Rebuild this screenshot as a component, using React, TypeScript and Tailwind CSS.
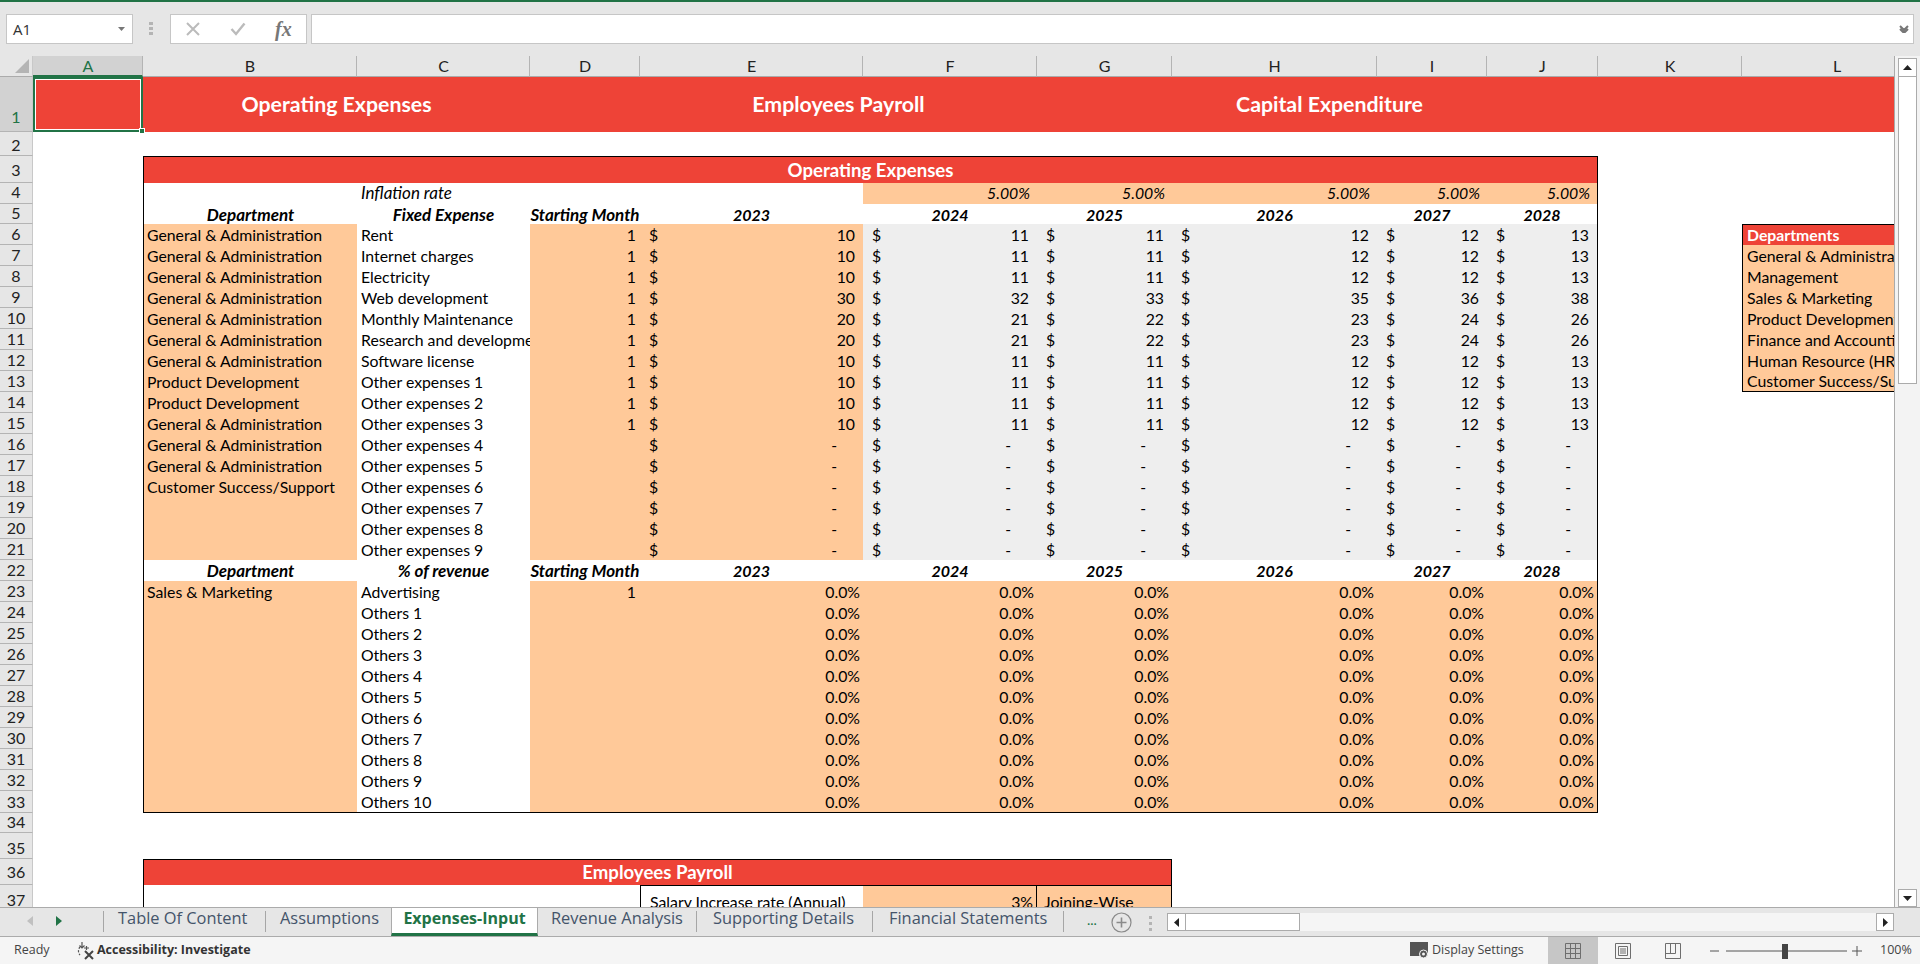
import React from "react";

const GRID = "grid grid-rows-[minmax(0,1fr)] grid-cols-[33px_110px_214px_173px_110px_223px_174px_135px_205px_110px_111px_144px_190px]";
const PEACH = "bg-[#ffc999]";
const GREY = "bg-[#eeeeee]";
const RED = "bg-[#ee4337]";

const COLS: [string, string][] = [
  ["A", "bg-[#d2d2d2] text-[#217346] border-b-2 border-b-[#217346]"],
  ["B", ""], ["C", ""], ["D", ""], ["E", ""], ["F", ""], ["G", ""], ["H", ""], ["I", ""], ["J", ""], ["K", ""], ["L", ""],
];

function Row({ n, h, active, pb, children }: { n: number; h: string; active?: boolean; pb?: string; children: React.ReactNode }) {
  return (
    <div className={`${GRID} ${h}`}>
      <div className={`flex items-end justify-center border-b border-r border-b-[#b4b4b4] border-r-[#c8c8c8] text-[16px] leading-[21px] text-[#222] ${pb ?? ""} ${active ? "bg-[#d2d2d2] text-[#217346]" : "bg-[#e6e6e6]"}`}>
        {n}
      </div>
      {children}
    </div>
  );
}

const Text = ({ className, children }: { className?: string; children?: React.ReactNode }) => (
  <div className={`flex items-center overflow-hidden whitespace-nowrap ${className ?? ""}`}>{children}</div>
);

const Head = ({ className, children }: { className?: string; children?: React.ReactNode }) => (
  <div className={`flex items-center justify-center overflow-hidden whitespace-nowrap font-bold italic ${className ?? ""}`}>{children}</div>
);

function Money({ value, className }: { value: number | null; className?: string }) {
  return (
    <div className={`flex items-center justify-between pl-[9px] ${value === null ? "pr-[26px]" : "pr-[8px]"} ${className ?? ""}`}>
      <span>$</span>
      <span>{value === null ? "-" : value}</span>
    </div>
  );
}

const Pct = ({ className }: { className?: string }) => (
  <div className={`flex items-center justify-end pr-[3px] ${PEACH} ${className ?? ""}`}>0.0%</div>
);

const Rate = ({ className }: { className?: string }) => (
  <div className={`flex items-center justify-end pb-[1px] pr-[7px] italic ${PEACH} ${className ?? ""}`}>5.00%</div>
);

const GA = "General & Administration";
const PD = "Product Development";
const EXP: [string, string, boolean, number[] | null][] = [
  [GA, "Rent", true, [10, 11, 11, 12, 12, 13]],
  [GA, "Internet charges", true, [10, 11, 11, 12, 12, 13]],
  [GA, "Electricity", true, [10, 11, 11, 12, 12, 13]],
  [GA, "Web development", true, [30, 32, 33, 35, 36, 38]],
  [GA, "Monthly Maintenance", true, [20, 21, 22, 23, 24, 26]],
  [GA, "Research and development", true, [20, 21, 22, 23, 24, 26]],
  [GA, "Software license", true, [10, 11, 11, 12, 12, 13]],
  [PD, "Other expenses 1", true, [10, 11, 11, 12, 12, 13]],
  [PD, "Other expenses 2", true, [10, 11, 11, 12, 12, 13]],
  [GA, "Other expenses 3", true, [10, 11, 11, 12, 12, 13]],
  [GA, "Other expenses 4", false, null],
  [GA, "Other expenses 5", false, null],
  ["Customer Success/Support", "Other expenses 6", false, null],
  ["", "Other expenses 7", false, null],
  ["", "Other expenses 8", false, null],
  ["", "Other expenses 9", false, null],
];

const DEPTS = ["General & Administration", "Management", "Sales & Marketing", "Product Development", "Finance and Accounting", "Human Resource (HR)", "Customer Success/Support"];

const REV = ["Advertising", "Others 1", "Others 2", "Others 3", "Others 4", "Others 5", "Others 6", "Others 7", "Others 8", "Others 9", "Others 10"];

function DeptCell({ i }: { i: number }) {
  if (i < 0) return <div />;
  return (
    <Text className={`border-l border-black pl-[4px] ${PEACH} ${i === 6 ? "border-b" : ""}`}>{DEPTS[i]}</Text>
  );
}

function YearHeads({ first, second, n, h, pt }: { first: string; second: string; n: number; h: string; pt: string }) {
  return (
    <Row n={n} h={h}>
      <div />
      <Head className={`border-l border-black text-[17px] ${pt}`}>{first}</Head>
      <Head className={`text-[17px] ${pt}`}>{second}</Head>
      <Head className={`text-[17px] ${pt}`}>Starting Month</Head>
      <Head className={`text-[16px] ${pt}`}>2023</Head>
      <Head className={`text-[16px] ${pt}`}>2024</Head>
      <Head className={`text-[16px] ${pt}`}>2025</Head>
      <Head className={`text-[16px] ${pt}`}>2026</Head>
      <Head className={`text-[16px] ${pt}`}>2027</Head>
      <Head className={`border-r border-black text-[16px] ${pt}`}>2028</Head>
      <div />
      <div />
    </Row>
  );
}

function Sheet() {
  return (
    <div className="h-[851px] min-w-0 flex-1 overflow-hidden bg-white text-[15.8px] text-black">
      <div className={`${GRID} h-[21px] bg-[#e6e6e6] text-[16px] text-[#222]`}>
        <div className="flex items-end justify-end border-b border-r border-b-[#ababab] border-r-[#c8c8c8] pb-[3px] pr-[3px]">
          <svg width="14" height="14" viewBox="0 0 14 14"><path d="M14 0V14H0Z" fill="#b4b4b4" /></svg>
        </div>
        {COLS.map(([c, cls]) => (
          <div key={c} className={`flex items-center justify-center border-r border-r-[#b4b4b4] pl-[1px] ${cls || "border-b border-b-[#ababab]"}`}>{c}</div>
        ))}
      </div>

      <Row n={1} h="h-[55px]" active pb="pb-[4px]">
        <div className="relative border-2 border-[#217346] bg-[#ee4337]">
          <div className="h-full border border-white" />
          <div className="absolute right-[-4px] bottom-[-4px] h-[6px] w-[6px] border border-white bg-[#217346]" />
        </div>
        <div className={`col-span-2 flex items-center justify-center text-[21.3px] font-bold text-white ${RED}`}>Operating Expenses</div>
        <div className={RED} />
        <div className={`col-span-2 flex items-center justify-center text-[21.3px] font-bold text-white ${RED}`}>Employees Payroll</div>
        <div className={RED} />
        <div className={`col-span-2 flex items-center justify-center text-[21.3px] font-bold text-white ${RED}`}>Capital Expenditure</div>
        <div className={`col-span-3 ${RED}`} />
      </Row>

      <Row n={2} h="h-[24px]"><div /></Row>

      <Row n={3} h="h-[27px]" pb="pb-[2px]">
        <div />
        <div className={`col-span-9 flex items-center justify-center border-x border-t border-black pt-[1px] text-[18.6px] font-bold text-white ${RED}`}>Operating Expenses</div>
      </Row>

      <Row n={4} h="h-[21px]" pb="pb-[1px]">
        <div />
        <div className="border-l border-black" />
        <Text className="pb-[1px] pl-[4px] text-[17px] italic">Inflation rate</Text>
        <div />
        <div />
        <Rate />
        <Rate />
        <Rate />
        <Rate />
        <Rate className="border-r border-black" />
        <div />
      </Row>

      <YearHeads n={5} h="h-[20px]" pt="pt-[2px]" first="Department" second="Fixed Expense" />

      {EXP.map(([dept, name, hasStart, vals], i) => {
        const v = (k: number) => (vals ? vals[k] : null);
        const deptIndex = i === 0 ? -1 : i - 1;
        return (
          <Row key={i} n={6 + i} h="h-[21px]">
            <div />
            <Text className={`border-l border-black pl-[3px] ${PEACH}`}>{dept}</Text>
            <Text className="pl-[4px]">{name}</Text>
            <div className={`flex items-center justify-end pr-[4px] ${PEACH}`}>{hasStart ? 1 : ""}</div>
            <Money value={v(0)} className={PEACH} />
            <Money value={v(1)} className={GREY} />
            <Money value={v(2)} className={GREY} />
            <Money value={v(3)} className={GREY} />
            <Money value={v(4)} className={GREY} />
            <Money value={v(5)} className={`border-r border-black ${GREY}`} />
            <div />
            {i === 0 ? (
              <Text className={`border-l border-t border-black pl-[4px] font-bold text-white ${RED}`}>Departments</Text>
            ) : i <= 7 ? (
              <DeptCell i={deptIndex} />
            ) : (
              <div />
            )}
          </Row>
        );
      })}

      <YearHeads n={22} h="h-[21px]" pt="" first="Department" second="% of revenue" />

      {REV.map((name, i) => {
        const last = i === REV.length - 1;
        const b = last ? "border-b border-black" : "";
        return (
          <Row key={name} n={23 + i} h={last ? "h-[22px]" : "h-[21px]"}>
            <div />
            <Text className={`border-l border-black pl-[3px] ${PEACH} ${b}`}>{i === 0 ? "Sales & Marketing" : ""}</Text>
            <Text className={`pl-[4px] ${b}`}>{name}</Text>
            <div className={`flex items-center justify-end pr-[4px] ${PEACH} ${b}`}>{i === 0 ? 1 : ""}</div>
            <Pct className={b} />
            <Pct className={b} />
            <Pct className={b} />
            <Pct className={b} />
            <Pct className={b} />
            <Pct className={`border-r border-black ${b}`} />
          </Row>
        );
      })}

      <Row n={34} h="h-[20px]"><div /></Row>
      <Row n={35} h="h-[26px]"><div /></Row>
      <Row n={36} h="h-[26px]" pb="pb-[2px]">
        <div />
        <div className={`col-span-6 flex items-center justify-center border-x border-t border-black pt-[1px] text-[18.6px] font-bold text-white ${RED}`}>Employees Payroll</div>
      </Row>
      <Row n={37} h="h-[32px]" pb="pb-[6px]">
        <div />
        <div className="border-l border-black" />
        <div />
        <div />
        <Text className="border-l border-t border-black pl-[9px]">Salary Increase rate (Annual)</Text>
        <div className={`flex items-center justify-end border-t border-r border-black pr-[3px] ${PEACH}`}>3%</div>
        <Text className={`border-t border-r border-black pl-[7px] ${PEACH}`}>Joining-Wise</Text>
      </Row>
    </div>
  );
}

function VScroll() {
  return (
    <div className="flex h-[851px] w-[26px] flex-col border-l border-[#ababab] bg-[#f3f3f3] pl-[3px] pr-[3px] pt-[2px]">
      <div className="flex h-[19px] items-center justify-center border border-[#ababab] bg-white">
        <svg width="9" height="5" viewBox="0 0 9 5"><path d="M4.5 0L9 5H0Z" fill="#222" /></svg>
      </div>
      <div className="h-[307px] border border-t-0 border-[#ababab] bg-white" />
      <div className="flex-1" />
      <div className="flex h-[18px] items-center justify-center border border-[#ababab] bg-white">
        <svg width="9" height="5" viewBox="0 0 9 5"><path d="M0 0H9L4.5 5Z" fill="#222" /></svg>
      </div>
    </div>
  );
}

const TabSep = ({ ml }: { ml: string }) => <div className={`h-[21px] w-px bg-[#a6a6a6] ${ml}`} />;

function TabBar() {
  const tabText = "whitespace-nowrap font-['Open_Sans',sans-serif] text-[16.4px] leading-[20px] text-[#44546a]";
  return (
    <div className="flex h-[30px] items-start border-y border-[#ababab] bg-[#e6e6e6]">
      <div className="flex h-full w-[103px] shrink-0 items-center pl-[27px] pb-[2px]">
        <svg width="6" height="10" viewBox="0 0 6 10"><path d="M6 0V10L0 5Z" fill="#c0c0c0" /></svg>
        <svg className="ml-[23px]" width="6" height="10" viewBox="0 0 6 10"><path d="M0 0V10L6 5Z" fill="#217346" /></svg>
      </div>
      <TabSep ml="mt-[3px]" />
      <div className={`ml-[14px] w-[147px] ${tabText}`}>Table Of Content</div>
      <TabSep ml="mt-[3px]" />
      <div className={`ml-[14px] w-[111px] ${tabText}`}>Assumptions</div>
      <div className="flex h-[28px] w-[147px] justify-center border-x border-b-[3px] border-x-[#ababab] border-b-[#217346] bg-white font-['Open_Sans',sans-serif] text-[16px] leading-[20px] font-bold text-[#217346]">Expenses-Input</div>
      <div className={`ml-[13px] w-[145px] ${tabText}`}>Revenue Analysis</div>
      <TabSep ml="mt-[3px]" />
      <div className={`ml-[16px] w-[159px] ${tabText}`}>Supporting Details</div>
      <TabSep ml="mt-[3px]" />
      <div className={`ml-[16px] w-[174px] ${tabText}`}>Financial Statements</div>
      <TabSep ml="mt-[3px]" />
      <div className="ml-[23px] w-[24px] pt-[3px] text-[14px] leading-[18px] text-[#217346]">...</div>
      <svg className="mt-[4px]" width="21" height="21" viewBox="0 0 21 21" fill="none" stroke="#8a8a8a">
        <circle cx="10.5" cy="10.5" r="9.5" strokeWidth="1.2" />
        <path d="M10.5 5.5V15.5M5.5 10.5H15.5" strokeWidth="1.6" />
      </svg>
      <svg className="ml-[17px] mt-[8px]" width="3" height="15" viewBox="0 0 3 15"><path d="M0 0H3V3H0ZM0 6H3V9H0ZM0 12H3V15H0Z" fill="#b4b4b4" /></svg>
      <div className="ml-[15px] mt-[5px] flex h-[18px] w-[727px] bg-[#f5f5f5]">
        <div className="flex w-[19px] items-center justify-center border border-[#ababab] bg-white">
          <svg width="5" height="9" viewBox="0 0 5 9"><path d="M5 0V9L0 4.5Z" fill="#222" /></svg>
        </div>
        <div className="w-[114px] border border-l-0 border-[#ababab] bg-white" />
        <div className="flex-1" />
        <div className="flex w-[18px] items-center justify-center border border-[#ababab] bg-white">
          <svg width="5" height="9" viewBox="0 0 5 9"><path d="M0 0V9L5 4.5Z" fill="#222" /></svg>
        </div>
      </div>
    </div>
  );
}

function StatusBar() {
  return (
    <div className="flex h-[27px] items-center bg-[#f5f5f5] font-['Open_Sans',sans-serif] text-[12.5px] text-[#444]">
      <span className="ml-[14px] w-[60px]">Ready</span>
      <svg width="22" height="20" viewBox="0 0 22 20" fill="none" stroke="#555" strokeWidth="1.2">
        <path d="M6 6A6 6 0 0 0 6 14" strokeDasharray="2 1.5" />
        <path d="M8 1V7M5.5 4.5L8 7L10.5 4.5" />
        <path d="M10 7H15M12.5 5V9" />
        <path d="M11 10L19 18M19 10L11 18" strokeWidth="2" stroke="#444" />
      </svg>
      <span className="ml-[1px] w-[1314px] font-bold whitespace-nowrap text-[#333]">Accessibility: Investigate</span>
      <svg className="-ml-[1px]" width="20" height="19" viewBox="0 0 20 19">
        <path d="M0 1H18V12H12L9 15H0Z" fill="#555" />
        <circle cx="13.5" cy="13" r="4" fill="#555" stroke="#f5f5f5" strokeWidth="1" />
        <circle cx="13.5" cy="13" r="1.5" fill="#f5f5f5" />
      </svg>
      <span className="ml-[2px] w-[116px] whitespace-nowrap">Display Settings</span>
      <div className="flex h-full w-[50px] items-center justify-center bg-[#c6c6c6]">
        <svg width="16" height="16" viewBox="0 0 16 16" fill="none" stroke="#6e6e6e"><path d="M.5.5H15.5V15.5H.5ZM5.5.5V15.5M10.5.5V15.5M.5 5.5H15.5M.5 10.5H15.5" /></svg>
      </div>
      <div className="flex h-full w-[50px] items-center justify-center">
        <svg width="16" height="16" viewBox="0 0 16 16" fill="none" stroke="#6e6e6e"><path d="M.5.5H15.5V15.5H.5ZM3.5 3.5H12.5V12.5H3.5ZM5 6H11M5 8H11M5 10H11" /></svg>
      </div>
      <div className="flex h-full w-[50px] items-center justify-center">
        <svg width="16" height="16" viewBox="0 0 16 16" fill="none" stroke="#6e6e6e"><path d="M.5.5H15.5V15.5H.5ZM.5 10.5H10.5V.5M5.5.5V10.5" /></svg>
      </div>
      <svg className="ml-[12px]" width="137" height="18" viewBox="0 0 137 18" fill="none">
        <path d="M0 9H9M16 9H137" stroke="#555" strokeWidth="1" />
        <rect x="72" y="2" width="6" height="15" fill="#444" />
      </svg>
      <svg className="ml-[5px]" width="10" height="10" viewBox="0 0 10 10"><path d="M5 0V10M0 5H10" stroke="#555" /></svg>
      <span className="ml-[18px] whitespace-nowrap">100%</span>
    </div>
  );
}

function FormulaBar() {
  return (
    <div className="flex h-[54px] items-start bg-[#e6e6e6] pl-[6px] pt-[12px] pr-[6px]">
      <div className="flex h-[30px] w-[127px] items-center justify-between border border-[#c6c6c6] bg-white pl-[6px] pr-[7px] font-['Open_Sans',sans-serif] text-[15px] text-[#333]">
        <span>A1</span>
        <svg width="7" height="4" viewBox="0 0 7 4"><path d="M0 0H7L3.5 4Z" fill="#777" /></svg>
      </div>
      <svg className="ml-[16px] mt-[8px]" width="4" height="14" viewBox="0 0 4 14"><path d="M0 0H4V3H0ZM0 5H4V8H0ZM0 10H4V13H0Z" fill="#b4b4b4" /></svg>
      <div className="ml-[17px] flex h-[30px] w-[137px] items-center border border-[#c6c6c6] bg-white">
        <svg className="ml-[14px]" width="16" height="16" viewBox="0 0 16 16" fill="none" stroke="#bbb" strokeWidth="2"><path d="M2 2L14 14M14 2L2 14" /></svg>
        <svg className="ml-[29px]" width="16" height="16" viewBox="0 0 16 16" fill="none" stroke="#bbb" strokeWidth="2.4"><path d="M1.5 8L6 13L14.5 2.5" /></svg>
        <span className="ml-[29px] font-['Liberation_Serif',serif] text-[20px] leading-none font-bold text-[#777] italic">fx</span>
      </div>
      <div className="ml-[4px] flex h-[30px] flex-1 items-center justify-end border border-[#c6c6c6] bg-white pr-[4px]">
        <svg width="10" height="8" viewBox="0 0 10 8" fill="none" stroke="#777" strokeWidth="2"><path d="M1 1L5 5L9 1M1 4L5 8L9 4" /></svg>
      </div>
    </div>
  );
}

export default function App() {
  return (
    <div className="flex h-[964px] w-[1920px] flex-col overflow-hidden font-['Lato',sans-serif]">
      <div className="h-[2px] bg-[#217346]" />
      <FormulaBar />
      <div className="flex">
        <Sheet />
        <VScroll />
      </div>
      <TabBar />
      <StatusBar />
    </div>
  );
}
